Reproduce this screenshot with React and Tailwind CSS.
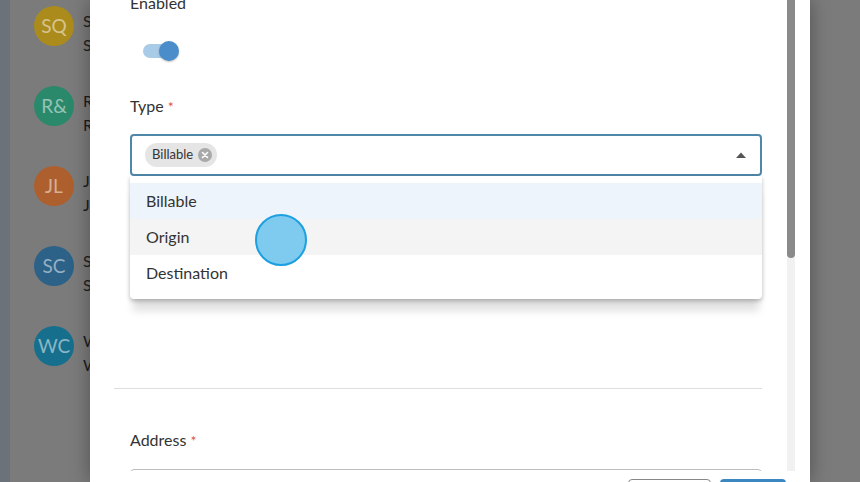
import React from 'react';

const people = [
    { initials: "SQ", bg: "bg-[#ab8b1c]", name: "Sarah Quinn", role: "Sales" },
    { initials: "R&", bg: "bg-[#2b896b]", name: "R&D Team", role: "Research" },
    { initials: "JL", bg: "bg-[#ae5f2e]", name: "Jason Lee", role: "Jobs" },
    { initials: "SC", bg: "bg-[#2c6188]", name: "Sam Carter", role: "Support" },
    { initials: "WC", bg: "bg-[#166f8d]", name: "Will Cole", role: "Warehouse" },
];

function Avatar({ initials, bg }) {
    return (
        <div className={`w-10 h-10 shrink-0 rounded-full flex items-center justify-center text-[19px] text-white/50 ${bg}`}>
            {initials}
        </div>
    );
}

function Label({ children, required }) {
    return (
        <p className="h-[24px] leading-[24px] text-[16px] text-[#333]">
            {children}
            {required && <span className="ml-1 text-[#d9534f] text-[14px]">*</span>}
        </p>
    );
}

function App() {
    return (
        <div className="relative w-[860px] h-[482px] overflow-hidden flex font-['Lato',sans-serif]">
            {/* page behind the backdrop */}
            <div className="w-[90px] shrink-0 flex bg-[#7b7b7b] overflow-hidden">
                <div className="w-[10px] shrink-0 bg-[#6c7279]" />
                <div className="pl-[24px] pt-[6px] flex flex-col">
                    {people.map((p) => (
                        <div key={p.initials} className="h-[80px] flex gap-[9px]">
                            <Avatar initials={p.initials} bg={p.bg} />
                            <div className="mt-[3px] text-[16px] leading-[24px] text-[#1e1e1e] whitespace-nowrap">
                                <p>{p.name}</p>
                                <p>{p.role}</p>
                            </div>
                        </div>
                    ))}
                </div>
            </div>

            {/* modal */}
            <div className="relative z-10 w-[720px] shrink-0 bg-white flex flex-col shadow-[0_0_18px_rgba(0,0,0,0.35)]">
                <div className="h-[471px] shrink-0 flex overflow-hidden pr-[15px]">
                    <div className="flex-1 pl-[40px] pr-[25px]">
                        <div className="-mt-[9px] flex flex-col">
                            <Label>Enabled</Label>
                            <div className="mt-[26px] ml-[13px] h-[20px] flex items-center">
                                <div className="w-[32px] h-[14px] rounded-full bg-[#a8cbe8]" />
                                <div className="-ml-[16px] w-[20px] h-[20px] rounded-full bg-[#4a8dca] shadow-[0_1px_2px_rgba(0,0,0,0.25)]" />
                            </div>

                            <div className="mt-[33px]">
                                <Label required>Type</Label>
                            </div>
                            <div className="relative mt-[16px]">
                                <div className="h-[42px] border-2 border-[#4f87a9] rounded-[4px] flex items-center pl-[13px] pr-[14px]">
                                    <span className="h-[24px] flex items-center gap-[5px] rounded-full bg-[#e5e5e5] pl-[7px] pr-[5px] text-[13px] text-[#333]">
                                        Billable
                                        <span className="w-[14px] h-[14px] rounded-full bg-[#a9a9a9] flex items-center justify-center">
                                            <svg width="8" height="8" viewBox="0 0 8 8">
                                                <path d="M1.5 1.5L6.5 6.5M6.5 1.5L1.5 6.5" stroke="white" strokeWidth="1.6" strokeLinecap="round" />
                                            </svg>
                                        </span>
                                    </span>
                                    <span className="ml-auto">
                                        <svg width="10" height="6" viewBox="0 0 10 6">
                                            <path d="M0 6L5 0.5L10 6Z" fill="#555" />
                                        </svg>
                                    </span>
                                </div>

                                <ul className="absolute left-0 right-0 top-[42px] z-10 bg-white rounded-b-[4px] pt-[7px] pb-[8px] text-[16px] text-[#333] shadow-[0_2px_4px_rgba(0,0,0,0.25),0_15px_8px_-3px_rgba(0,0,0,0.12)]">
                                    <li className="h-[36px] flex items-center px-[16px] bg-[#eef4fb]">Billable</li>
                                    <li className="h-[36px] flex items-center px-[16px] bg-[#f4f4f4]">Origin</li>
                                    <li className="h-[36px] flex items-center px-[16px]">Destination</li>
                                </ul>
                            </div>

                            <div className="mt-[212px] -ml-4 h-px bg-[#dedede]" />

                            <div className="mt-[39px]">
                                <Label required>Address</Label>
                            </div>
                            <div className="mt-[17px] h-[42px] border border-[#bdbdbd] rounded-[4px]" />
                        </div>
                    </div>

                    {/* scrollbar */}
                    <div className="w-[8px] shrink-0 bg-[#f1f1f1]">
                        <div className="h-[258px] bg-[#8a8a8a] rounded-b-[4px]" />
                    </div>
                </div>

                <div className="flex justify-end gap-[9px] pt-[8px] pr-[24px]">
                    <button className="w-[83px] h-[36px] rounded-[4px] border border-[#888] bg-white text-[14px] text-[#555]">Cancel</button>
                    <button className="w-[66px] h-[36px] rounded-[4px] bg-[#3a87c2] text-[14px] text-white">Save</button>
                </div>
            </div>

            <div className="flex-1 bg-[#7b7b7b]" />

            {/* click indicator */}
            <div className="absolute z-20 left-[255px] top-[214px] w-[52px] h-[52px] rounded-full bg-[#7fcaef] border-2 border-[#1ca0e0]" />
        </div>
    );
}

export default App;
